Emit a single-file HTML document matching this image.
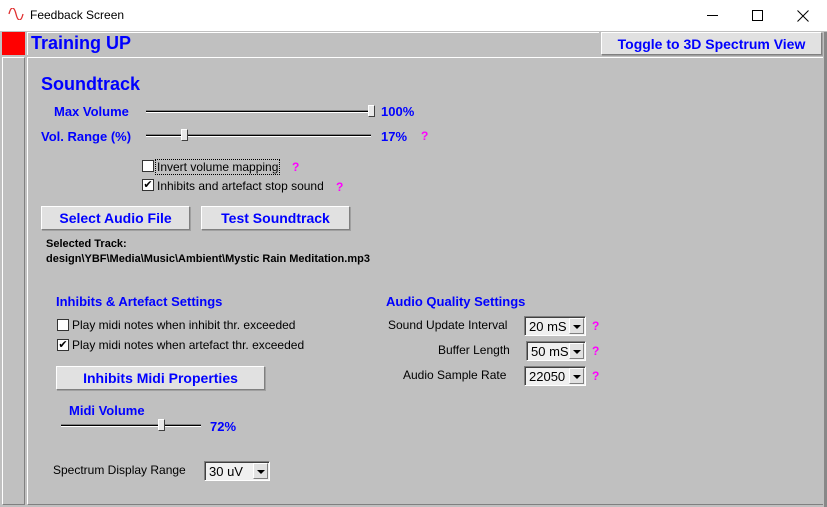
<!DOCTYPE html><html><head><style>
*{margin:0;padding:0;box-sizing:border-box}
body{width:827px;height:507px;background:#c0c0c0;position:relative;overflow:hidden;font-family:"Liberation Sans",sans-serif}
.a{position:absolute;white-space:nowrap}
.b{color:#0000ff;font-weight:bold}
.btn{position:absolute;background:#e1e1e1;border:1px solid;border-color:#fff #808080 #808080 #fff;box-shadow:1px 1px 0 #a0a0a0;color:#0000ff;font-weight:bold;font-size:14px;text-align:center}
.q{color:#ff00ff;font-weight:bold;font-size:12px}
.t{font-size:12px;color:#000}
.cb{position:absolute;width:12px;height:12px;background:#fff;border:1px solid #333;font-size:11px;line-height:10px;text-align:center}
.sl{position:absolute;height:3px;border-top:1px solid #808080;border-bottom:1px solid #fff;background:#000}
.th{position:absolute;width:7px;height:12px;background:#e8e8e8;border:1px solid;border-color:#fff #404040 #404040 #fff}
.dd{position:absolute;height:20px;background:#f0f0f0;border:1px solid;border-color:#808080 #fff #fff #808080;box-shadow:inset 1px 1px 0 #404040;font-size:13px;padding:2px 0 0 4px}
.dd i{position:absolute;right:1px;top:1px;width:15px;height:16px;background:#e1e1e1;border:1px solid;border-color:#fff #808080 #808080 #fff}
.dd i:after{content:"";position:absolute;left:3px;top:6px;border:4px solid transparent;border-top:4px solid #000;border-bottom:0}
</style></head><body>
<div class="a" style="left:0;top:0;width:827px;height:31px;background:#fff"></div>
<svg class="a" style="left:8px;top:8px" width="16" height="12"><path d="M1 6 C3 -2 6 -2 8 6 C10 14 13 14 15 6" stroke="#e03030" fill="none" stroke-width="1.3"/></svg>
<div class="a" style="left:30px;top:8px;font-size:12px">Feedback Screen</div>
<div class="a" style="left:707px;top:15px;width:11px;height:1px;background:#000"></div>
<div class="a" style="left:752px;top:10px;width:11px;height:11px;border:1px solid #000"></div>
<svg class="a" style="left:797px;top:10px" width="12" height="12"><path d="M0.5 0.5L11.5 11.5M11.5 0.5L0.5 11.5" stroke="#000" stroke-width="1"/></svg>
<div class="a" style="left:2px;top:32px;width:23px;height:23px;background:#f00"></div>
<div class="a" style="left:27px;top:32px;width:572px;height:23px;border-left:1px solid #fff;border-top:1px solid #fff"></div>
<div class="a b" style="left:31px;top:33px;font-size:18px">Training UP</div>
<div class="btn" style="left:601px;top:32px;width:221px;height:23px;line-height:22px;font-size:14px">Toggle to 3D Spectrum View</div>
<div class="a" style="left:2px;top:57px;width:23px;height:448px;border:1px solid;border-color:#fff #808080 #808080 #fff"></div>
<div class="a" style="left:27px;top:57px;width:796px;height:448px;border-left:1px solid #fff;border-top:1px solid #fff;border-bottom:1px solid #808080"></div>
<div class="a" style="left:824px;top:32px;width:3px;height:475px;background:#888"></div>
<div class="a b" style="left:41px;top:74px;font-size:18px">Soundtrack</div>
<div class="a b" style="left:54px;top:104px;font-size:13px">Max Volume</div>
<div class="sl" style="left:146px;top:110px;width:229px"></div><div class="th" style="left:368px;top:105px"></div>
<div class="a b" style="left:381px;top:104px;font-size:13px">100%</div>
<div class="a b" style="left:41px;top:129px;font-size:13px">Vol. Range (%)</div>
<div class="sl" style="left:146px;top:134px;width:225px"></div><div class="th" style="left:181px;top:129px"></div>
<div class="a b" style="left:381px;top:129px;font-size:13px">17%</div>
<div class="a q" style="left:421px;top:129px">?</div>
<div class="cb" style="left:142px;top:160px"></div>
<div class="a t" style="left:155px;top:159px;border:1px dotted #000;padding:0 1px">Invert volume mapping</div>
<div class="a q" style="left:292px;top:160px">?</div>
<div class="cb" style="left:142px;top:179px">✔</div>
<div class="a t" style="left:157px;top:179px">Inhibits and artefact stop sound</div>
<div class="a q" style="left:336px;top:180px">?</div>
<div class="btn" style="left:41px;top:206px;width:149px;height:24px;line-height:23px">Select Audio File</div>
<div class="btn" style="left:201px;top:206px;width:149px;height:24px;line-height:23px">Test Soundtrack</div>
<div class="a" style="left:46px;top:238px;font-size:11px;font-weight:bold">Selected Track:</div>
<div class="a" style="left:46px;top:253px;font-size:11px;font-weight:bold">design\YBF\Media\Music\Ambient\Mystic Rain Meditation.mp3</div>
<div class="a b" style="left:56px;top:294px;font-size:13px">Inhibits &amp; Artefact Settings</div>
<div class="cb" style="left:57px;top:319px"></div>
<div class="a t" style="left:72px;top:318px">Play midi notes when inhibit thr. exceeded</div>
<div class="cb" style="left:57px;top:339px">✔</div>
<div class="a t" style="left:72px;top:338px">Play midi notes when artefact thr. exceeded</div>
<div class="btn" style="left:56px;top:366px;width:209px;height:24px;line-height:23px">Inhibits Midi Properties</div>
<div class="a b" style="left:69px;top:403px;font-size:13px">Midi Volume</div>
<div class="sl" style="left:61px;top:424px;width:140px"></div><div class="th" style="left:158px;top:419px"></div>
<div class="a b" style="left:210px;top:419px;font-size:13px">72%</div>
<div class="a t" style="left:53px;top:463px">Spectrum Display Range</div>
<div class="dd" style="left:204px;top:461px;width:66px">30 uV<i></i></div>
<div class="a b" style="left:386px;top:294px;font-size:13px">Audio Quality Settings</div>
<div class="a t" style="left:388px;top:318px">Sound Update Interval</div>
<div class="dd" style="left:524px;top:316px;width:62px">20 mS<i></i></div>
<div class="a q" style="left:592px;top:319px">?</div>
<div class="a t" style="left:438px;top:343px">Buffer Length</div>
<div class="dd" style="left:526px;top:341px;width:60px">50 mS<i></i></div>
<div class="a q" style="left:592px;top:344px">?</div>
<div class="a t" style="left:403px;top:368px">Audio Sample Rate</div>
<div class="dd" style="left:524px;top:366px;width:62px">22050<i></i></div>
<div class="a q" style="left:592px;top:369px">?</div>
</body></html>
